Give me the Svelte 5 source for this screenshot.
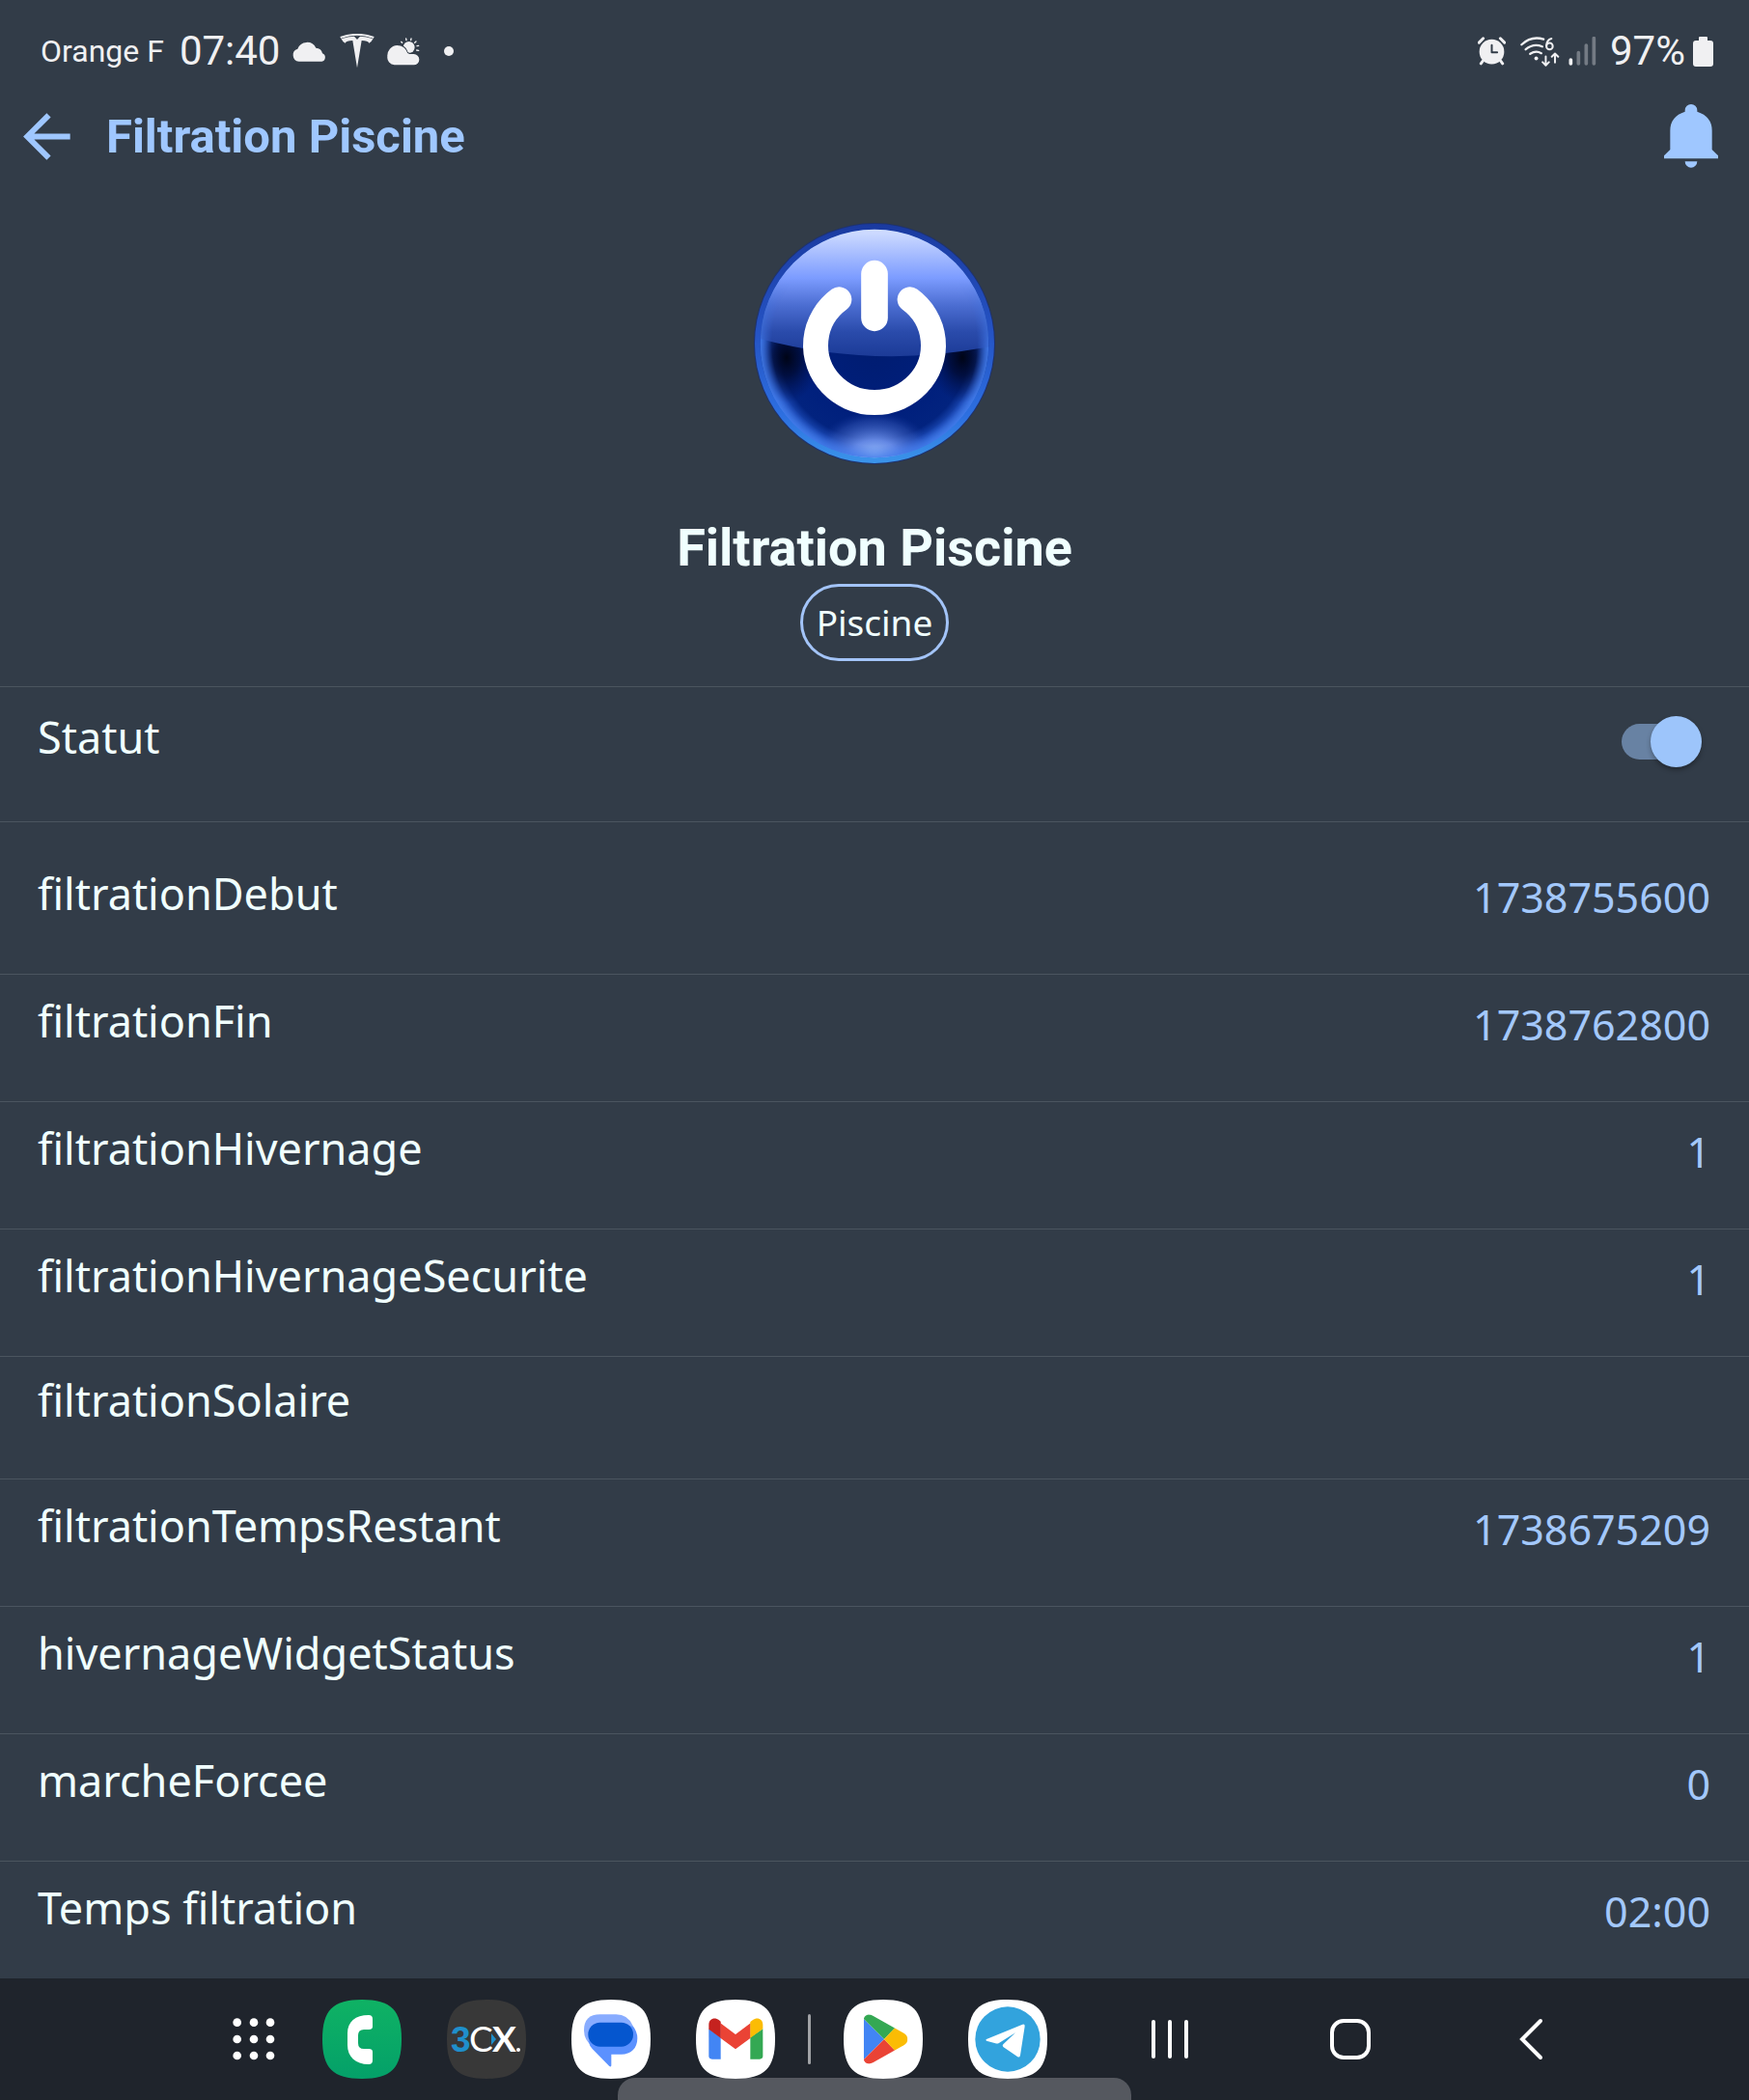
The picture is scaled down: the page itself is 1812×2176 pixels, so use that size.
<script>
  let on = $state(true);

  const infos = [
    { name: 'filtrationDebut', value: '1738755600' },
    { name: 'filtrationFin', value: '1738762800' },
    { name: 'filtrationHivernage', value: '1' },
    { name: 'filtrationHivernageSecurite', value: '1' },
    { name: 'filtrationSolaire', value: '' },
    { name: 'filtrationTempsRestant', value: '1738675209' },
    { name: 'hivernageWidgetStatus', value: '1' },
    { name: 'marcheForcee', value: '0' },
    { name: 'Temps filtration', value: '02:00' }
  ];

  const squircle = 'M41 0C71 0 82 11 82 41S71 82 41 82 0 71 0 41 11 0 41 0Z';
</script>

<div class="screen">
  <div class="status-bar">
    <div class="status-left">
      <span class="carrier">Orange F</span>
      <span class="clock">07:40</span>
      <svg class="ic-cloud" viewBox="914 127 108 63" width="36" height="21" aria-hidden="true">
        <path fill="#f0f0f2" d="M934 189a20 20 0 0 1-4-39 31 31 0 0 1 57-3 21 21 0 0 1 20 17 13 13 0 0 1-2 25z" />
      </svg>
      <svg class="ic-tesla" viewBox="1055 108 108 108" width="36" height="36" aria-hidden="true">
        <path fill="#f0f0f2" d="M1056 117Q1109 98 1162 117L1159 124Q1109 108 1059 124Z" />
        <path fill="#323c48" d="M1059 122Q1109 104 1159 122L1158 124Q1109 108 1060 124Z" />
        <path fill="#f0f0f2" d="M1060 124Q1080 116 1100 116L1109 126 1118 116Q1138 116 1158 124 1154 134 1146 137 1143 130 1123 129L1109 214 1095 129Q1075 130 1072 137 1064 134 1060 124Z" />
      </svg>
      <svg class="ic-weather" viewBox="1199 119 102 87" width="34" height="29" aria-hidden="true">
        <g stroke="#f0f0f2" stroke-width="4" stroke-linecap="round">
          <path d="M1243 132l3 3M1258 122l1 5M1274 122l-1 5M1289 131l-4 4M1297 144l-5 1M1297 159l-6-1" />
        </g>
        <circle cx="1267" cy="149" r="18" fill="#f0f0f2" />
        <path fill="#f0f0f2" stroke="#323c48" stroke-width="6" paint-order="stroke" d="M1222 204a23 23 0 0 1-22-26 32 32 0 0 1 30-35c16 0 27 9 31 21 2 5 6 6 12 6h9a17 17 0 0 1 0 34z" />
      </svg>
      <svg class="ic-dot" viewBox="0 0 10 10" width="10" height="10" aria-hidden="true"><circle cx="5" cy="5" r="5" fill="#f0f0f2" /></svg>
    </div>
    <div class="status-right">
      <svg viewBox="90 116 88 90" width="29" height="30" aria-hidden="true">
        <circle cx="134" cy="163" r="39" fill="#f0f0f2" />
        <path stroke="#f0f0f2" stroke-width="9" stroke-linecap="round" fill="none" d="M94 134l13-13M174 134l-13-13M106 192l-6 8M162 192l6 8" />
        <path stroke="#323c48" stroke-width="6" stroke-linecap="round" stroke-linejoin="round" fill="none" d="M134 142v23h17" />
      </svg>
      <svg class="ic-wifi" viewBox="221 115 124 94" width="41" height="31" aria-hidden="true">
        <g fill="none" stroke="#f0f0f2" stroke-width="7" stroke-linecap="round" stroke-linejoin="round">
          <path d="M225 140Q256 111 294 123M238 155Q262 135 290 146M252 169Q270 157 287 167" />
          <path stroke-width="6" d="M319 121Q304 125 303 143" />
          <circle cx="313" cy="145" r="10" stroke-width="6" />
          <path stroke-width="6" d="M301 177v27M291 195l10 10 10-10M330 196v-27M320 178l10-10 10 10" />
        </g>
        <circle cx="271" cy="183" r="6" fill="#f0f0f2" />
      </svg>
      <svg class="ic-signal" viewBox="371 116 87 90" width="29" height="30" aria-hidden="true">
        <g stroke-width="11" stroke-linecap="round">
          <path stroke="#f0f0f2" d="M378 188v12" />
          <path stroke="#747b84" d="M402 166v34M426 143v57M450 121v79" />
        </g>
      </svg>
      <span class="clock">97%</span>
      <svg class="ic-battery" viewBox="0 0 21 31" width="21" height="31" aria-hidden="true">
        <path fill="#f0f0f2" d="M6 1q0-1 1-1h7q1 0 1 1v3h3q3 0 3 3v21q0 3-3 3H3q-3 0-3-3V7q0-3 3-3h3z" />
      </svg>
    </div>
  </div>

  <header class="app-bar">
    <button class="plain" aria-label="Retour">
      <svg viewBox="72 347 148 148" width="49" height="49" aria-hidden="true">
        <path fill="none" stroke="#9fc7ff" stroke-width="18" d="M219 421H84M152 354L85 421l67 67" />
      </svg>
    </button>
    <h1>Filtration Piscine</h1>
    <button class="plain" aria-label="Notifications">
      <svg viewBox="672 326 168 198" width="56" height="66" aria-hidden="true">
        <path fill="#9fc7ff" d="M672 495v-9l19-19v-59q0-44 46-59v-4a19 19 0 0 1 38 0v4q46 15 46 59v59l19 19v9zM737 504h38a19 19 0 0 1-38 0z" />
      </svg>
    </button>
  </header>

  <main>
    <section class="hero">
      <button class="plain" aria-label="Marche / arrêt">
        <svg viewBox="63 61 750 750" width="250" height="250" aria-hidden="true">
          <defs>
            <linearGradient id="rim" x1="0" y1="0" x2="0" y2="1">
              <stop offset="0" stop-color="#1a3aa0" />
              <stop offset=".45" stop-color="#2553c4" />
              <stop offset=".8" stop-color="#2d6fe0" />
              <stop offset="1" stop-color="#3b95ea" />
            </linearGradient>
            <radialGradient id="base" gradientUnits="userSpaceOnUse" cx="438" cy="436" r="354">
              <stop offset="0" stop-color="#001c70" />
              <stop offset=".6" stop-color="#001f7c" />
              <stop offset=".84" stop-color="#02237f" />
              <stop offset=".93" stop-color="#1a48b4" />
              <stop offset="1" stop-color="#3a78e4" />
            </radialGradient>
            <linearGradient id="gloss" gradientUnits="userSpaceOnUse" x1="0" y1="80" x2="0" y2="480">
              <stop offset="0" stop-color="#d3dfff" />
              <stop offset=".18" stop-color="#aabfff" />
              <stop offset=".38" stop-color="#7c9cff" />
              <stop offset=".6" stop-color="#4a6cd0" />
              <stop offset=".8" stop-color="#2a4bab" />
              <stop offset="1" stop-color="#1b3a96" />
            </linearGradient>
            <radialGradient id="edge" gradientUnits="userSpaceOnUse" cx="438" cy="436" r="354">
              <stop offset=".9" stop-color="#3c6ee0" stop-opacity="0" />
              <stop offset="1" stop-color="#4078e8" stop-opacity=".8" />
            </radialGradient>
            <linearGradient id="fade" x1="0" y1="0" x2="0" y2="1">
              <stop offset="0" stop-color="#000" />
              <stop offset=".25" stop-color="#000" />
              <stop offset=".5" stop-color="#fff" />
            </linearGradient>
            <mask id="lower"><rect x="63" y="61" width="750" height="750" fill="url(#fade)" /></mask>
            <radialGradient id="shade">
              <stop offset="0" stop-color="#000416" />
              <stop offset=".4" stop-color="#00082c" stop-opacity=".75" />
              <stop offset="1" stop-color="#001050" stop-opacity="0" />
            </radialGradient>
            <radialGradient id="glow">
              <stop offset="0" stop-color="#a8ccff" />
              <stop offset=".4" stop-color="#7397f2" stop-opacity=".85" />
              <stop offset=".8" stop-color="#4468cc" stop-opacity=".35" />
              <stop offset="1" stop-color="#1a3ca8" stop-opacity="0" />
            </radialGradient>
            <clipPath id="ball"><circle cx="438" cy="436" r="355" /></clipPath>
          </defs>
          <circle cx="438" cy="436" r="375" fill="#18307c" opacity=".8" />
          <circle cx="438" cy="436" r="372" fill="url(#rim)" />
          <g clip-path="url(#ball)">
            <circle cx="438" cy="436" r="355" fill="url(#base)" />
            <ellipse cx="165" cy="480" rx="100" ry="140" fill="url(#shade)" />
            <ellipse cx="711" cy="480" rx="100" ry="140" fill="url(#shade)" />
            <ellipse cx="438" cy="795" rx="190" ry="150" fill="url(#glow)" />
            <path fill="url(#gloss)" d="M63 61H813V442Q438 520 63 416Z" />
            <circle cx="438" cy="436" r="355" fill="url(#edge)" mask="url(#lower)" />
          </g>
          <g fill="none" stroke="#fff" stroke-linecap="round">
            <path stroke-width="78" d="M328 299A183 178 0 1 0 548 299" />
            <path stroke-width="83" d="M438 219V356" />
          </g>
        </svg>
      </button>
      <h2>Filtration Piscine</h2>
      <span class="chip">Piscine</span>
    </section>

    <div class="row status-row">
      <label for="statut">Statut</label>
      <span class="switch-box"><input id="statut" class="switch" type="checkbox" role="switch" bind:checked={on} /></span>
    </div>

    <dl>
      {#each infos as info}
        <div class="row">
          <dt>{info.name}</dt>
          {#if info.value}<dd>{info.value}</dd>{:else}<dd class="empty"></dd>{/if}
        </div>
      {/each}
    </dl>
  </main>

  <nav aria-label="Barre des tâches">
    <button class="plain drawer" aria-label="Applications">
      <svg viewBox="65 155 132 132" width="44" height="44" fill="#fff" aria-hidden="true">
        {#each [169, 221, 272] as cy}
          {#each [79, 131, 182] as cx}<circle {cx} {cy} r="13" />{/each}
        {/each}
      </svg>
    </button>
    <div class="apps">
      <button class="plain" aria-label="Téléphone">
        <svg viewBox="0 0 82 82" width="82" height="82" aria-hidden="true">
          <defs><linearGradient id="tel" x1="0" y1="0" x2="0" y2="1"><stop offset="0" stop-color="#0fb264" /><stop offset="1" stop-color="#04a069" /></linearGradient></defs>
          <path d={squircle} fill="url(#tel)" />
          <path fill="#fff" d="M48 16q4 0 4 4v8q0 3-4 3h-5q-6 0-6 6v8q0 6 6 6h5q4 0 4 3v9q0 4-4 4C34 67 26 59 26 47V35C26 23 34 16 48 16Z" />
        </svg>
      </button>
      <button class="plain" aria-label="3CX">
        <svg viewBox="0 0 82 82" width="82" height="82" aria-hidden="true">
          <path d={squircle} fill="#383838" />
          <text class="logo-digit" x="4" y="54">3</text>
          <text class="logo-letter" x="23" y="54">C</text>
          <path fill="#1f8fcb" d="M46 35l5 6-5 6z" />
          <text class="logo-letter heavy" x="47" y="54">X</text>
          <circle cx="74" cy="52" r="2" fill="#fff" />
        </svg>
      </button>
      <button class="plain" aria-label="Messages">
        <svg viewBox="95 97 246 246" width="82" height="82" aria-hidden="true">
          <g transform="translate(95 97) scale(3)"><path d={squircle} fill="#fff" /></g>
          <path fill="#88acff" d="M184 143h50q36 0 52 35l-70 65h-55q-27-20-27-50 0-50 50-50z" />
          <path fill="#5b91ff" d="M286 179q14 18 14 38c0 32-20 50-50 50h-31v34q0 7-6 3l-53-54q-9-9-12-24l60-40z" />
          <rect x="147" y="168" width="140" height="75" rx="37" fill="#0556cf" />
        </svg>
      </button>
      <button class="plain" aria-label="Gmail">
        <svg viewBox="482 97 246 246" width="82" height="82" aria-hidden="true">
          <g transform="translate(482 97) scale(3)"><path d={squircle} fill="#fff" /></g>
          <path fill="#4285f4" d="M522 188l37 26v68h-27q-10 0-10-10z" />
          <path fill="#34a853" d="M690 188l-39 26v68h29q10 0 10-10z" />
          <path fill="#ea4335" d="M558 170l47 35 47-35v46l-47 35-47-35z" />
          <path fill="#c5221f" d="M522 175c0-18 18-25 32-14l5 4v51l-37-27z" />
          <path fill="#fbbc04" d="M690 175c0-18-18-25-32-14l-7 5v50l39-28z" />
        </svg>
      </button>
    </div>
    <span class="divider"></span>
    <div class="apps">
      <button class="plain" aria-label="Play Store">
        <svg viewBox="98 97 246 246" width="82" height="82" aria-hidden="true">
          <defs><clipPath id="play"><path d="M160 163c0-17 14-24 29-16l96 54c16 9 16 29 0 38l-96 54c-15 8-29 1-29-16z" /></clipPath></defs>
          <g transform="translate(98 97) scale(3)"><path d={squircle} fill="#fff" /></g>
          <g clip-path="url(#play)">
            <path fill="#4285f4" d="M160 156l64 64-64 64z" />
            <path fill="#34a853" d="M160 140h140l-76 80-64-64z" />
            <path fill="#ea4335" d="M160 300h140l-76-80-64 64z" />
            <path fill="#fbbc04" d="M224 220l36-38h50v76h-50z" />
          </g>
        </svg>
      </button>
      <button class="plain" aria-label="Telegram">
        <svg viewBox="484 97 246 246" width="82" height="82" aria-hidden="true">
          <g transform="translate(484 97) scale(3)"><path d={squircle} fill="#fff" /></g>
          <circle cx="607" cy="220" r="101" fill="#32a3dd" />
          <path fill="#fff" d="M541 220l112-46q8-2 7 6l-14 90q-2 9-9 4l-44-30q-4-4 0-8l38-36-50 31q-6 4-12 2l-28-8q-4-3 0-5z" />
        </svg>
      </button>
    </div>
    <div class="system">
      <button class="plain" aria-label="Récents">
        <svg viewBox="0 0 46 46" width="46" height="46" aria-hidden="true"><path stroke="#fff" stroke-width="4" stroke-linecap="round" d="M6 5v36M23 5v36M40 5v36" /></svg>
      </button>
      <button class="plain" aria-label="Accueil">
        <svg viewBox="0 0 46 46" width="46" height="46" aria-hidden="true"><rect x="4" y="4" width="38" height="38" rx="12" fill="none" stroke="#fff" stroke-width="4" /></svg>
      </button>
      <button class="plain" aria-label="Précédent">
        <svg viewBox="0 0 46 46" width="46" height="46" aria-hidden="true"><path fill="none" stroke="#fff" stroke-width="4" stroke-linecap="round" d="M33 4L14 23l19 19" /></svg>
      </button>
    </div>
    <span class="handle"></span>
  </nav>
</div>

<style>
  :global(body) {
    background: #323c48;
  }
  .screen {
    display: flex;
    flex-direction: column;
    height: 100vh;
    overflow: hidden;
    background: #323c48;
    color: #f0ffff;
    font-family: 'Noto Sans', sans-serif;
  }
  .plain {
    display: block;
    flex: none;
    padding: 0;
    border: 0;
    background: none;
    cursor: pointer;
  }
  svg {
    display: block;
    flex: none;
  }

  .status-bar {
    display: flex;
    flex: none;
    align-items: center;
    justify-content: space-between;
    height: 106px;
    padding: 0 37px 0 42px;
    color: #f0f0f2;
    font-family: Roboto, sans-serif;
    line-height: 40px;
  }
  .status-left,
  .status-right {
    display: flex;
    align-items: center;
  }
  .status-left {
    gap: 13px;
  }
  .carrier {
    padding-right: 3px;
    font-size: 32px;
  }
  .clock {
    font-size: 42px;
  }
  .ic-dot {
    margin-left: 12px;
  }
  .ic-wifi {
    margin-left: 15px;
  }
  .ic-signal {
    margin: 0 14px 0 9px;
  }
  .ic-battery {
    margin-left: 8px;
  }

  .app-bar {
    display: flex;
    flex: none;
    align-items: center;
    height: 70px;
    padding: 0 32px 0 24px;
  }
  h1 {
    flex: 1;
    margin: 2px 0 0 37px;
    color: #9fc7ff;
    font: bold 49px/68px Roboto, sans-serif;
  }

  main {
    flex: 1;
    min-height: 0;
    overflow-y: auto;
    scrollbar-width: none;
  }
  .hero {
    display: flex;
    flex-direction: column;
    align-items: center;
    padding: 55px 0 26px;
  }
  h2 {
    margin: 56px 0 6px;
    font: bold 54px/62px Roboto, sans-serif;
  }
  .chip {
    box-sizing: border-box;
    padding: 0 14px;
    border: 3px solid #a3c4f8;
    border-radius: 40px;
    font-size: 37px;
    line-height: 74px;
  }

  .row {
    display: flex;
    align-items: center;
    justify-content: space-between;
    padding: 13px 40px 49px 39px;
    border-top: 1px solid #4b555f;
    font-size: 45px;
    line-height: 64px;
  }
  dl {
    margin: 0;
    padding-top: 25px;
    border-top: 1px solid #4b555f;
  }
  dl .row:first-child {
    border-top-color: transparent;
  }
  dd {
    margin: 0;
    padding-top: 9px;
    color: #a3c8fb;
    font-size: 43px;
    line-height: 60px;
  }
  dd.empty {
    padding: 0;
  }
  .switch-box {
    display: flex;
    align-items: center;
    height: 67px;
    padding: 10px 9px 0 0;
  }
  .switch {
    display: grid;
    align-items: center;
    width: 83px;
    height: 53px;
    margin: 0;
    appearance: none;
    cursor: pointer;
  }
  .switch::before,
  .switch::after {
    grid-area: 1 / 1;
    content: '';
  }
  .switch::before {
    width: 80px;
    height: 37px;
    border-radius: 19px;
    background: #6882a3;
  }
  .switch::after {
    width: 53px;
    height: 53px;
    border-radius: 50%;
    background: #9dc5fb;
    box-shadow: 0 3px 5px rgba(0, 0, 0, 0.3);
  }
  .switch:checked::after {
    justify-self: end;
  }

  nav {
    position: relative;
    display: flex;
    flex: none;
    align-items: center;
    justify-content: center;
    height: 126px;
    padding-left: 37px;
    background: #1f242c;
  }
  .drawer {
    margin-right: 49px;
  }
  .apps {
    position: relative;
    z-index: 1;
    display: flex;
    gap: 47px;
  }
  .divider {
    width: 3px;
    height: 52px;
    margin: 0 34px;
    border-radius: 2px;
    background: #a0a2a6;
  }
  .system {
    display: flex;
    gap: 141px;
    margin-left: 104px;
  }
  .handle {
    position: absolute;
    bottom: 0;
    left: 50%;
    width: 532px;
    height: 23px;
    border-radius: 18px 18px 0 0;
    background: #55585f;
    transform: translateX(-50%);
  }
  .logo-digit {
    fill: #1f8fcb;
    font: bold 37px 'Liberation Sans', sans-serif;
  }
  .logo-letter {
    fill: #fff;
    font: 37px Lato, sans-serif;
  }
  .heavy {
    font-weight: bold;
  }
</style>
